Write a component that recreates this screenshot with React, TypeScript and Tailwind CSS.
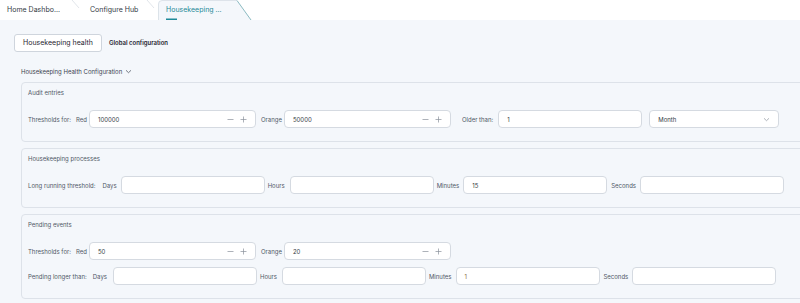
import React from "react";

function Minus() {
  return (
    <svg width="7" height="7" viewBox="0 0 7 7" className="block">
      <path d="M0.5 3.5H6.5" stroke="#8a919b" strokeWidth="0.7" />
    </svg>
  );
}
function Plus() {
  return (
    <svg width="7" height="7" viewBox="0 0 7 7" className="block">
      <path d="M0.5 3.5H6.5M3.5 0.5V6.5" stroke="#8a919b" strokeWidth="0.7" />
    </svg>
  );
}
function Chevron({ color = "#8a919b" }: { color?: string }) {
  return (
    <svg width="7" height="5" viewBox="0 0 7 5" className="block">
      <path d="M1 1.3L3.5 3.7L6 1.3" fill="none" stroke={color} strokeWidth="0.7" />
    </svg>
  );
}

function Input({
  w,
  value = "",
  stepper = false,
  valueClass = "text-[#333a44]",
}: {
  w: string;
  value?: string;
  stepper?: boolean;
  valueClass?: string;
}) {
  return (
    <div
      className={`${w} h-[18px] shrink-0 bg-white border border-[#d5dae1] rounded-[4px] flex items-center pl-[8px] pr-[8px]`}
    >
      <span className={`flex-1 text-[6px] ${valueClass}`}>{value}</span>
      {stepper && (
        <div className="flex items-center gap-[6px]">
          <Minus />
          <Plus />
        </div>
      )}
    </div>
  );
}

function Label({ children, className = "" }: { children: React.ReactNode; className?: string }) {
  return <span className={`text-[6px] text-[#505866] whitespace-nowrap shrink-0 ${className}`}>{children}</span>;
}

function Card({ title, children }: { title: string; children: React.ReactNode }) {
  return (
    <div className="w-[800px] border border-[#dde2e9] rounded-[4px] bg-[#f4f7fb] pt-[5px] pl-[6px] pb-[13px]">
      <div className="text-[6px] leading-[10px] text-[#505866]">{title}</div>
      <div className="mt-[12px] flex flex-col gap-[7px]">{children}</div>
    </div>
  );
}

function Tab({
  label,
  w,
  active = false,
}: {
  label: string;
  w: string;
  active?: boolean;
}) {
  return (
    <div className={`relative h-[20px] ${w} shrink-0 flex items-center`}>
      {active && (
        <svg className="absolute left-0 top-0" width="94" height="20" viewBox="0 0 94 20">
          <path d="M0 20 V4 Q0 0.5 4 0.5 H79 L93 20 Z" fill="#f4f7fb" />
          <path d="M0.5 20 V4 Q0.5 0.5 4 0.5 H79" fill="none" stroke="#d6dde5" strokeWidth="0.8" />
          <path d="M79 0.5 L93 20" fill="none" stroke="#6fa9b3" strokeWidth="0.8" />
          <rect x="8" y="18.5" width="11" height="1.5" fill="#1f8a99" />
        </svg>
      )}
      <span
        className={`relative text-[7px] whitespace-nowrap ${
          active ? "text-[#1f8a99] pl-[8px]" : "text-[#333a44] pl-[7px]"
        }`}
      >
        {label}
      </span>
      {!active && (
        <svg className="absolute right-0 top-0" width="12" height="20" viewBox="0 0 12 20">
          <path d="M1 0 L8 8" fill="none" stroke="#d9dee5" strokeWidth="0.8" />
        </svg>
      )}
    </div>
  );
}

export default function App() {
  return (
    <div className="w-[800px] h-[303px] overflow-hidden bg-[#f4f7fb] [font-family:Inter,'Liberation_Sans',sans-serif]">
      <div className="h-[20px] bg-white flex">
        <Tab label="Home Dashbo..." w="w-[83px]" />
        <Tab label="Configure Hub" w="w-[75px]" />
        <Tab label="Housekeeping ..." w="w-[94px]" active />
      </div>

      <div className="pt-[14px] pl-[14px] flex items-center gap-[7px]">
        <div className="h-[18px] w-[88px] justify-center bg-white border border-[#cfd5dd] rounded-[3px] flex items-center text-[7px] text-[#1f2530]">
          Housekeeping health
        </div>
        <div className="text-[6px] font-semibold text-[#1f2530] -mt-[2px]">Global configuration</div>
      </div>

      <div className="pl-[21px] mt-[14px] flex items-center gap-[3px] h-[10px]">
        <span className="text-[6px] text-[#3b4350]">Housekeeping Health Configuration</span>
        <Chevron color="#3b4350" />
      </div>

      <div className="pl-[21px] mt-[6px] flex flex-col gap-[6px]">
        <Card title="Audit entries">
          <div className="flex items-center">
            <Label>Thresholds for:</Label>
            <Label className="ml-[5px]">Red</Label>
            <div className="ml-[2px]">
              <Input w="w-[167px]" value="100000" stepper />
            </div>
            <Label className="ml-[5px]">Orange</Label>
            <div className="ml-[2px]">
              <Input w="w-[167px]" value="50000" stepper />
            </div>
            <Label className="ml-[11px]">Older than:</Label>
            <div className="ml-[5px]">
              <Input w="w-[144px]" value="1" />
            </div>
            <div className="ml-[7px] w-[130px] h-[18px] bg-white border border-[#d5dae1] rounded-[4px] flex items-center justify-between pl-[8px] pr-[8px]">
              <span className="text-[6px] text-[#333a44]">Month</span>
              <Chevron />
            </div>
          </div>
        </Card>

        <Card title="Housekeeping processes">
          <div className="flex items-center">
            <Label>Long running threshold:</Label>
            <Label className="ml-[7px]">Days</Label>
            <div className="ml-[4px]">
              <Input w="w-[144px]" />
            </div>
            <Label className="ml-[3px]">Hours</Label>
            <div className="ml-[5px]">
              <Input w="w-[144px]" />
            </div>
            <Label className="ml-[3px]">Minutes</Label>
            <div className="ml-[4px]">
              <Input w="w-[144px]" value="15" />
            </div>
            <Label className="ml-[4px]">Seconds</Label>
            <div className="ml-[4px]">
              <Input w="w-[144px]" />
            </div>
          </div>
        </Card>

        <Card title="Pending events">
          <div className="flex items-center">
            <Label>Thresholds for:</Label>
            <Label className="ml-[5px]">Red</Label>
            <div className="ml-[2px]">
              <Input w="w-[167px]" value="50" stepper />
            </div>
            <Label className="ml-[5px]">Orange</Label>
            <div className="ml-[2px]">
              <Input w="w-[167px]" value="20" stepper />
            </div>
          </div>
          <div className="flex items-center">
            <Label>Pending longer than:</Label>
            <Label className="ml-[6px]">Days</Label>
            <div className="ml-[6px]">
              <Input w="w-[144px]" />
            </div>
            <Label className="ml-[3px]">Hours</Label>
            <div className="ml-[5px]">
              <Input w="w-[144px]" />
            </div>
            <Label className="ml-[3px]">Minutes</Label>
            <div className="ml-[4px]">
              <Input w="w-[144px]" value="1" valueClass="text-[#8a6b3f]" />
            </div>
            <Label className="ml-[4px]">Seconds</Label>
            <div className="ml-[4px]">
              <Input w="w-[144px]" />
            </div>
          </div>
        </Card>
      </div>
    </div>
  );
}
